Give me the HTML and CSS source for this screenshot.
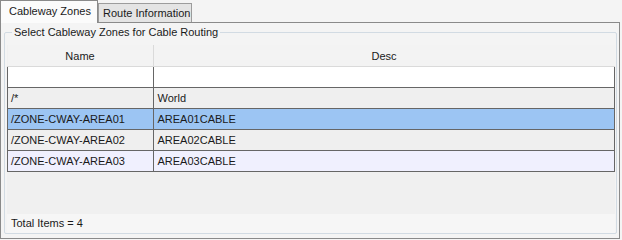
FILE: index.html
```html
<!DOCTYPE html>
<html lang="en">
<head>
    <meta charset="UTF-8">
    <title>Cableway Zones</title>
    <link rel="stylesheet" href="styles.css">
</head>
<body>
    <div class="tabs">
        <div class="tab active">Cableway Zones</div>
        <div class="tab">Route Information</div>
    </div>

    <div class="panel">
        <fieldset class="group">
            <legend>Select Cableway Zones for Cable Routing</legend>

            <div class="grid">
                <table>
                    <thead>
                        <tr>
                            <th class="col-name">Name</th>
                            <th>Desc</th>
                        </tr>
                    </thead>
                    <tbody>
                        <tr class="row-blank"><td></td><td></td></tr>
                        <tr class="row-gray"><td>/*</td><td>World</td></tr>
                        <tr class="row-selected"><td>/ZONE-CWAY-AREA01</td><td>AREA01CABLE</td></tr>
                        <tr class="row-gray"><td>/ZONE-CWAY-AREA02</td><td>AREA02CABLE</td></tr>
                        <tr class="row-lavender"><td>/ZONE-CWAY-AREA03</td><td>AREA03CABLE</td></tr>
                    </tbody>
                </table>
            </div>

            <div class="status">Total Items = 4</div>
        </fieldset>
    </div>
</body>
</html>
```

FILE: styles.css
```css
body {
    margin: 0;
    background-color: #f4f4f4;
    font-family: "Liberation Sans", Arial, sans-serif;
    font-size: 11px;
    color: #1a1a1a;
}

/* pestañas */
.tabs {
    display: flex;
    align-items: flex-end;
    height: 22px;
}

.tab {
    box-sizing: border-box;
    height: 19px;
    padding: 2px 2px 0 4px;
    background-color: #e4e4e4;
    border: 1px solid #9c9c9c;
    border-bottom: none;
    line-height: 15px;
    white-space: nowrap;
}

.tab + .tab {
    width: 94px;
}

.tab.active {
    position: relative;
    z-index: 1;
    width: 98px;
    height: 23px;
    margin-bottom: -1px;
    padding: 3px 0 0 8px;
    background-color: #fbfbfb;
    border-color: #8a8a8a;
}

.panel {
    box-sizing: border-box;
    width: 620px;
    height: 217px;
    padding: 2px 2px 4px 3px;
    border: 1px solid #8a8a8a;
}

/* caja de grupo */
.group {
    box-sizing: border-box;
    height: 100%;
    margin: 0;
    padding: 6px 1px 0 2px;
    border: 1px solid #d2dbe3;
    border-radius: 2px;
    display: flex;
    flex-direction: column;
}

.group legend {
    margin-left: 5px;
    padding: 0 2px;
    line-height: 14px;
}

.grid {
    flex: 1;
    background-color: #f0f0f0;
}

table {
    width: 608px;
    border-collapse: collapse;
    table-layout: fixed;
}

th {
    height: 21px;
    padding: 0;
    font-weight: normal;
    background-color: #f3f3f3;
    border-bottom: 1px solid #dadada;
    border-left: 1px solid #dadada;
}

th.col-name {
    width: 145px;
    border-left: none;
}

td {
    height: 20px;
    padding: 0 0 0 3px;
    border: 1px solid #666666;
    border-top: none;
    white-space: nowrap;
}

td + td {
    padding-left: 4px;
}

.row-blank td {
    background-color: #ffffff;
}

.row-gray td {
    background-color: #efefef;
}

.row-selected td {
    background-color: #9cc5f3;
}

.row-lavender td {
    background-color: #f0f0fe;
}

.status {
    height: 19px;
    padding-left: 4px;
    line-height: 19px;
    background-color: #f6f6f6;
}
```
